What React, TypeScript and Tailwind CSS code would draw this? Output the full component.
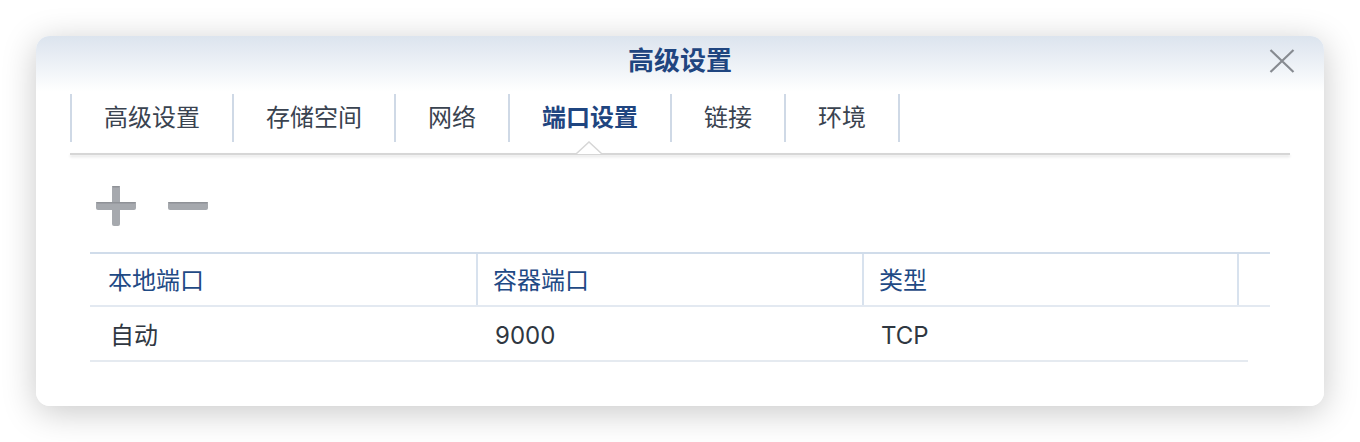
import { useState } from "react";

const tabs = ["高级设置", "存储空间", "网络", "端口设置", "链接", "环境"];

const columns = [
  { key: "local", header: "本地端口", width: "w-[386px]" },
  { key: "container", header: "容器端口", width: "w-[386px]" },
  { key: "type", header: "类型", width: "w-[375px]" },
];

const rows = [{ local: "自动", container: "9000", type: "TCP" }];

function CloseIcon() {
  return (
    <svg width="26" height="24" viewBox="0 0 26 24" fill="none">
      <path d="M1.5 1L24.5 23M24.5 1L1.5 23" stroke="#878b91" strokeWidth="2.2" />
    </svg>
  );
}

function PlusIcon() {
  return (
    <svg width="40" height="40" viewBox="0 0 40 40">
      <rect x="0" y="16" width="40" height="8" rx="2" fill="#a6a9ae" />
      <rect x="16" y="0" width="8" height="40" rx="2" fill="#a6a9ae" />
      <rect x="16" y="0" width="8" height="1.5" rx="0.75" fill="#8f9297" />
      <rect x="0" y="16" width="40" height="1.5" rx="0.75" fill="#8f9297" />
    </svg>
  );
}

function MinusIcon() {
  return (
    <svg width="40" height="8" viewBox="0 0 40 8">
      <rect x="0" y="0" width="40" height="8" rx="2" fill="#a6a9ae" />
      <rect x="0" y="0" width="40" height="1.5" rx="0.75" fill="#8f9297" />
    </svg>
  );
}

export default function App() {
  const [active, setActive] = useState(3);

  return (
    <div
      className="h-[442px] w-[1360px] bg-white pl-[36px] pt-[36px]"
      style={{ fontFamily: 'Inter, "Noto Sans CJK SC", sans-serif' }}
    >
      <div className="relative h-[370px] w-[1288px] overflow-hidden rounded-[14px] bg-[linear-gradient(180deg,#dce4ee_0px,#eef2f7_30px,#ffffff_56px)] shadow-[0_6px_34px_rgba(0,0,0,0.22)]">
        <div className="flex h-[50px] items-center justify-center">
          <h1 className="text-[26px] font-bold leading-none text-[#1f4580]">高级设置</h1>
        </div>
        <button type="button" className="absolute right-[29px] top-[13px]">
          <CloseIcon />
        </button>

        <div className="mt-[8px] px-[34px]">
          <div className="flex h-[48px]">
            {tabs.map((tab, index) => (
              <button
                key={tab}
                type="button"
                onClick={() => setActive(index)}
                className={`flex items-center border-l-2 border-[#cfd9e6] px-8 text-[24px] leading-none ${
                  index === tabs.length - 1 ? "border-r-2" : ""
                } ${index === active ? "font-bold text-[#1f4580]" : "text-[#3a4350]"}`}
              >
                {tab}
              </button>
            ))}
          </div>
          <div className="relative mt-[11px] h-[2px] bg-[#d6d6d6] shadow-[0_2px_3px_rgba(0,0,0,0.12)]">
            <svg
              className="absolute top-[-12px] left-[506px]"
              width="26"
              height="14"
              viewBox="0 0 26 14"
            >
              <path d="M0 13L13 1L26 13Z" fill="#ffffff" />
              <path d="M0 13L13 1L26 13" fill="none" stroke="#d6d6d6" strokeWidth="1.5" />
            </svg>
          </div>

          <div className="mt-[31px] flex items-center gap-[32px] pl-[26px]">
            <PlusIcon />
            <MinusIcon />
          </div>

          <div className="mt-[26px] px-[20px]">
            <div className="flex h-[55px] border-y-2 border-t-[#d0dcea] border-b-[#e3e9f1]">
              {columns.map((column, index) => (
                <div
                  key={column.key}
                  className={`flex items-center ${column.width} ${
                    index > 0 ? "border-l-2 border-[#d8e2ee] pl-[15px]" : "pl-[18px]"
                  } pt-[2px] text-[24px] leading-none text-[#1f4a85]`}
                >
                  {column.header}
                </div>
              ))}
              <div className="flex-1 border-l-2 border-[#d8e2ee]" />
            </div>
            {rows.map((row, rowIndex) => (
              <div key={rowIndex} className="flex h-[55px] w-[1158px] border-b-2 border-[#e5eaf0]">
                {columns.map((column, index) => (
                  <div
                    key={column.key}
                    className={`flex items-center ${column.width} ${
                      index > 0 ? "pl-[19px]" : "pl-[20px]"
                    } pt-[4px] text-[24px] leading-none text-[#2f3741]`}
                  >
                    {row[column.key as keyof typeof row]}
                  </div>
                ))}
              </div>
            ))}
          </div>
        </div>
      </div>
    </div>
  );
}
